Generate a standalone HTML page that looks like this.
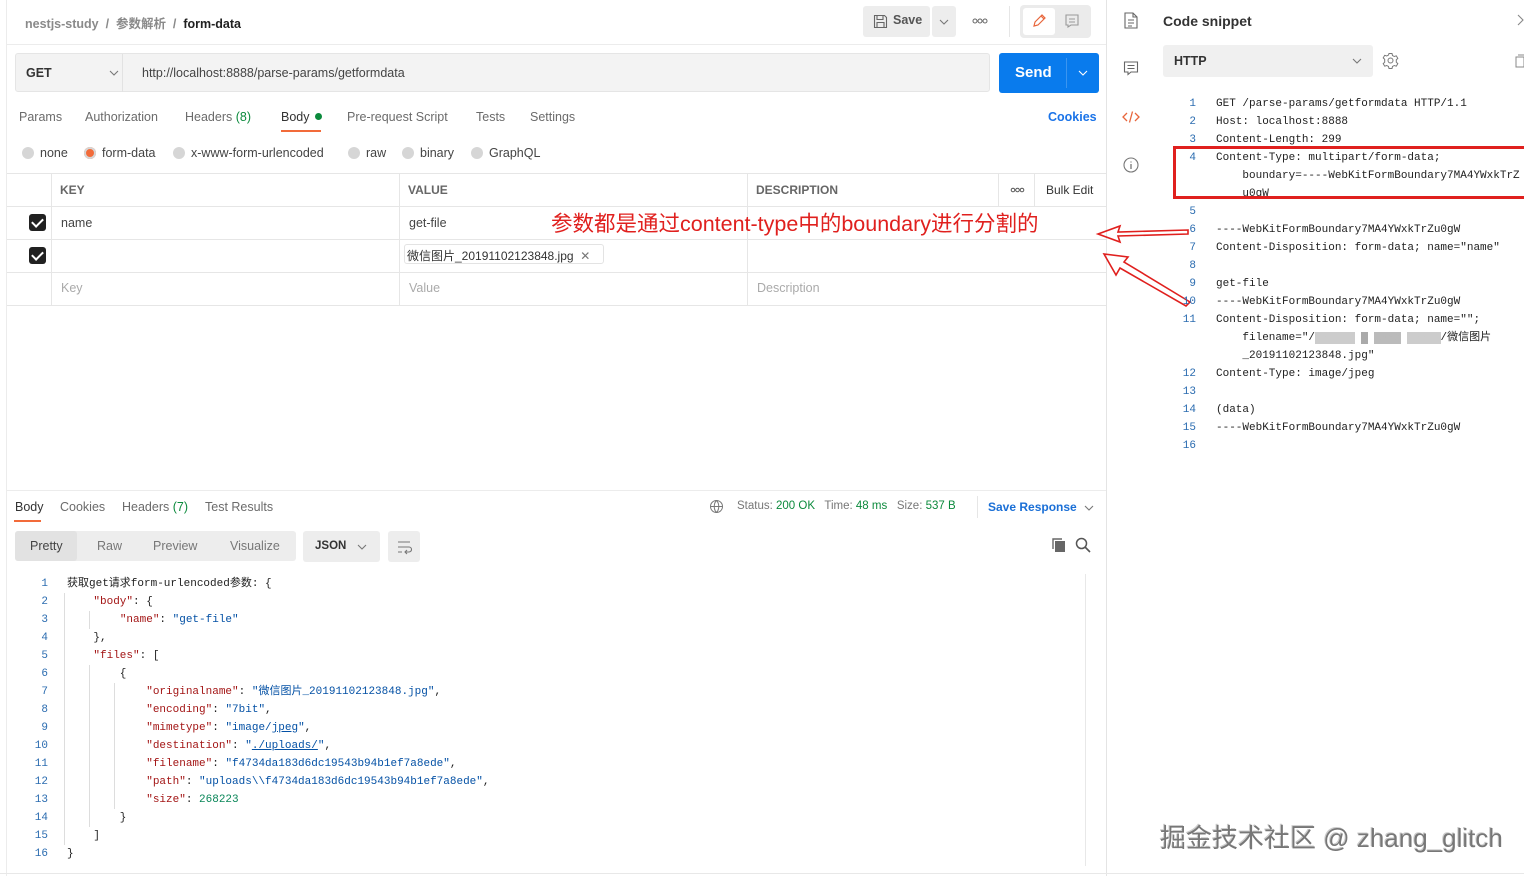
<!DOCTYPE html>
<html><head><meta charset="utf-8"><style>
*{margin:0;padding:0;box-sizing:border-box}
body{width:1524px;height:876px;overflow:hidden;background:#fff;font-family:"Liberation Sans","Noto Sans CJK SC",sans-serif;font-size:12.5px;color:#505050;position:relative}
.a{position:absolute;white-space:nowrap}
pre.a{white-space:pre}
.hl{position:absolute;height:1px;background:#e6e6e6}
.vl{position:absolute;width:1px;background:#e6e6e6}
.mono{font-family:"Liberation Mono","Noto Sans CJK SC",monospace;font-size:11px;color:#212121}
.ln{position:absolute;text-align:right;width:30px;color:#2b6cb0;font-family:"Liberation Mono",monospace;font-size:11px}
.k{color:#a31515}.s{color:#0451a5}.n{color:#098658}
.radio{display:inline-block;width:12px;height:12px;border-radius:50%;background:#d6d6d6;vertical-align:-2px;margin-right:6px}
.cb{position:absolute;width:17px;height:17px;background:#212121;border-radius:3px}
.cb:after{content:"";position:absolute;left:5px;top:2px;width:5px;height:9px;border:solid #fff;border-width:0 2px 2px 0;transform:rotate(45deg)}
.chev{position:absolute;width:10px;height:6px}
</style></head><body>
<svg width="0" height="0" style="position:absolute"><defs><symbol id="cv" viewBox="0 0 10 6"><path d="M1 1l4 4 4-4" fill="none" stroke="currentColor" stroke-width="1.1"/></symbol></defs></svg>
<div class="vl" style="left:6px;top:0;height:876px;background:#ececec"></div>
<div class="vl" style="left:1106px;top:0;height:876px;background:#e4e4e4"></div>
<div class="hl" style="left:0;top:873px;width:1524px;background:#e8e8e8"></div>

<div class="a" style="left:25px;top:13px;color:#8a8a8a;font-weight:bold;font-size:12.5px">nestjs-study &nbsp;/&nbsp; 参数解析 &nbsp;/&nbsp; <span style="color:#212121">form-data</span></div>
<div class="a" style="left:863px;top:6px;width:67px;height:31px;background:#ededed;border-radius:3px"></div>
<svg class="a" style="left:873px;top:14px" width="15" height="15" viewBox="0 0 15 15"><path d="M1.5 1.5h10l2 2v10h-12z M4 1.5v4h6v-4 M4 13.5v-5h7v5" fill="none" stroke="#666" stroke-width="1.1"/></svg>
<div class="a" style="left:893px;top:13px;font-weight:bold;color:#555">Save</div>
<div class="a" style="left:932px;top:6px;width:24px;height:31px;background:#ededed;border-radius:3px"></div>
<svg class="chev" style="left:939px;top:19px;color:#777"><use href="#cv"/></svg>
<svg class="a" style="left:972px;top:18px" width="16" height="6" viewBox="0 0 16 6"><circle cx="3" cy="3" r="2" fill="none" stroke="#666"/><circle cx="8" cy="3" r="2" fill="none" stroke="#666"/><circle cx="13" cy="3" r="2" fill="none" stroke="#666"/></svg>
<div class="vl" style="left:1009px;top:6px;height:31px"></div>
<div class="a" style="left:1020px;top:5px;width:71px;height:33px;background:#ebebeb;border-radius:4px"></div>
<div class="a" style="left:1023px;top:8px;width:32px;height:27px;background:#fff;border-radius:3px"></div>
<svg class="a" style="left:1031px;top:13px" width="16" height="16" viewBox="0 0 16 16"><path d="M3 13l1-4 7-7 3 3-7 7z M10 3l3 3" fill="none" stroke="#e8663c" stroke-width="1.2"/></svg>
<svg class="a" style="left:1064px;top:13px" width="16" height="16" viewBox="0 0 16 16"><path d="M2 2h12v10H7l-3 2v-2H2z M5 6h6 M5 9h6" fill="none" stroke="#999" stroke-width="1.1"/></svg>
<div class="hl" style="left:7px;top:44px;width:1099px;background:#ececec"></div>

<div class="a" style="left:15px;top:53px;width:975px;height:39px;background:#f3f3f3;border:1px solid #e5e5e5;border-radius:3px"></div>
<div class="vl" style="left:122px;top:54px;height:38px;background:#e2e2e2"></div>
<div class="a" style="left:26px;top:66px;font-weight:bold;color:#333;font-size:12.5px">GET</div>
<svg class="chev" style="left:109px;top:70px;color:#777"><use href="#cv"/></svg>
<div class="a" style="left:142px;top:66px;color:#444;font-size:12.5px">http://localhost:8888/parse-params/getformdata</div>
<div class="a" style="left:999px;top:53px;width:100px;height:40px;background:#097bed;border-radius:3px"></div>
<div class="a" style="left:1015px;top:64px;color:#fff;font-weight:bold;font-size:15px">Send</div>
<div class="a" style="left:1066px;top:58px;width:1px;height:30px;background:#3b95f0"></div>
<svg class="chev" style="left:1078px;top:70px;color:#fff"><use href="#cv"/></svg>

<div class="a" style="left:19px;top:110px;color:#6b6b6b">Params</div>
<div class="a" style="left:85px;top:110px;color:#6b6b6b">Authorization</div>
<div class="a" style="left:185px;top:110px;color:#6b6b6b">Headers <span style="color:#0b8a3c">(8)</span></div>
<div class="a" style="left:281px;top:110px;color:#333">Body <span style="display:inline-block;width:7px;height:7px;border-radius:50%;background:#0b8a3c;vertical-align:1px;margin-left:2px"></span></div>
<div class="a" style="left:281px;top:130px;width:40px;height:2px;background:#f26b3a"></div>
<div class="a" style="left:347px;top:110px;color:#6b6b6b">Pre-request Script</div>
<div class="a" style="left:476px;top:110px;color:#6b6b6b">Tests</div>
<div class="a" style="left:530px;top:110px;color:#6b6b6b">Settings</div>
<div class="a" style="left:1048px;top:110px;color:#1a73e8;font-weight:bold">Cookies</div>

<div class="a" style="left:22px;top:146px;color:#444"><span class="radio"></span>none</div>
<div class="a" style="left:84px;top:146px;color:#444"><span class="radio" style="background:#f26b3a;box-shadow:0 0 0 2px #d6d6d6 inset"></span>form-data</div>
<div class="a" style="left:173px;top:146px;color:#444"><span class="radio"></span>x-www-form-urlencoded</div>
<div class="a" style="left:348px;top:146px;color:#444"><span class="radio"></span>raw</div>
<div class="a" style="left:402px;top:146px;color:#444"><span class="radio"></span>binary</div>
<div class="a" style="left:471px;top:146px;color:#444"><span class="radio"></span>GraphQL</div>

<div class="hl" style="left:7px;top:173px;width:1099px"></div>
<div class="hl" style="left:7px;top:206px;width:1099px"></div>
<div class="hl" style="left:7px;top:239px;width:1099px"></div>
<div class="hl" style="left:7px;top:272px;width:1099px"></div>
<div class="hl" style="left:7px;top:305px;width:1099px"></div>
<div class="vl" style="left:51px;top:173px;height:132px"></div>
<div class="vl" style="left:399px;top:173px;height:132px"></div>
<div class="vl" style="left:747px;top:173px;height:132px"></div>
<div class="vl" style="left:998px;top:173px;height:33px"></div>
<div class="vl" style="left:1034px;top:173px;height:33px"></div>
<div class="a" style="left:60px;top:183px;font-weight:bold;color:#666;font-size:12px">KEY</div>
<div class="a" style="left:408px;top:183px;font-weight:bold;color:#666;font-size:12px">VALUE</div>
<div class="a" style="left:756px;top:183px;font-weight:bold;color:#666;font-size:12px">DESCRIPTION</div>
<svg class="a" style="left:1010px;top:187px" width="15" height="6" viewBox="0 0 15 6"><circle cx="3" cy="3" r="1.8" fill="none" stroke="#555"/><circle cx="7.5" cy="3" r="1.8" fill="none" stroke="#555"/><circle cx="12" cy="3" r="1.8" fill="none" stroke="#555"/></svg>
<div class="a" style="left:1046px;top:183px;color:#333;font-size:12px">Bulk Edit</div>
<div class="cb" style="left:29px;top:214px"></div>
<div class="cb" style="left:29px;top:247px"></div>
<div class="a" style="left:61px;top:216px;color:#444">name</div>
<div class="a" style="left:409px;top:216px;color:#444">get-file</div>
<div class="a" style="left:404px;top:244px;height:20px;width:200px;border:1px solid #e3e3e3;border-radius:3px;background:#fff"></div>
<div class="a" style="left:407px;top:247px;color:#333;font-size:12px">微信图片_20191102123848.jpg &nbsp;<span style="color:#777">✕</span></div>
<div class="a" style="left:61px;top:281px;color:#aaa">Key</div>
<div class="a" style="left:409px;top:281px;color:#aaa">Value</div>
<div class="a" style="left:757px;top:281px;color:#aaa">Description</div>

<div class="a" style="left:551px;top:207px;color:#e0201e;font-size:21.5px">参数都是通过content-type中的boundary进行分割的</div>
<svg class="a" style="left:1090px;top:220px" width="110" height="90" viewBox="0 0 110 90">
<path d="M98 10 L28 12 L30 6 L8 14 L30 22 L28 16 L98 14 Z" fill="none" stroke="#e0201e" stroke-width="1.6"/>
<path d="M100 82 L34 42 L38 37 L14 34 L26 55 L30 48 L96 86 Z" fill="none" stroke="#e0201e" stroke-width="1.6"/>
</svg>

<div class="hl" style="left:7px;top:490px;width:1099px;background:#ececec"></div>
<div class="a" style="left:15px;top:500px;color:#333">Body</div>
<div class="a" style="left:14px;top:520px;width:27px;height:2px;background:#f26b3a"></div>
<div class="a" style="left:60px;top:500px;color:#6b6b6b">Cookies</div>
<div class="a" style="left:122px;top:500px;color:#6b6b6b">Headers <span style="color:#0b8a3c">(7)</span></div>
<div class="a" style="left:205px;top:500px;color:#6b6b6b">Test Results</div>
<svg class="a" style="left:709px;top:499px" width="15" height="15" viewBox="0 0 15 15"><circle cx="7.5" cy="7.5" r="6" fill="none" stroke="#777"/><path d="M1.5 7.5h12 M7.5 1.5c-3 3-3 9 0 12 M7.5 1.5c3 3 3 9 0 12" fill="none" stroke="#777"/></svg>
<div class="a" style="left:737px;top:500px;font-size:11.5px;color:#777">Status: <span style="color:#0b8a3c">200 OK</span> &nbsp; Time: <span style="color:#0b8a3c">48 ms</span> &nbsp; Size: <span style="color:#0b8a3c">537 B</span></div>
<div class="vl" style="left:977px;top:496px;height:22px"></div>
<div class="a" style="left:988px;top:500px;color:#1a6fd6;font-weight:bold;font-size:12px">Save Response</div>
<svg class="chev" style="left:1084px;top:505px;color:#777"><use href="#cv"/></svg>

<div class="a" style="left:15px;top:531px;width:281px;height:30px;background:#ededed;border-radius:3px"></div>
<div class="a" style="left:15px;top:531px;width:62px;height:30px;background:#e2e2e2;border-radius:3px"></div>
<div class="a" style="left:30px;top:539px;color:#444">Pretty</div>
<div class="a" style="left:97px;top:539px;color:#777">Raw</div>
<div class="a" style="left:153px;top:539px;color:#777">Preview</div>
<div class="a" style="left:230px;top:539px;color:#777">Visualize</div>
<div class="a" style="left:303px;top:531px;width:77px;height:31px;background:#ededed;border-radius:3px"></div>
<div class="a" style="left:315px;top:540px;color:#333;font-weight:bold;font-size:11.5px">JSON</div>
<svg class="chev" style="left:357px;top:544px;color:#777"><use href="#cv"/></svg>
<div class="a" style="left:388px;top:531px;width:32px;height:31px;background:#ededed;border-radius:3px"></div>
<svg class="a" style="left:396px;top:539px" width="16" height="16" viewBox="0 0 16 16"><path d="M2 3h12 M2 8h11a2.5 2.5 0 0 1 0 5H9 M11 11l-2 2 2 2 M2 13h4" fill="none" stroke="#777" stroke-width="1.1"/></svg>
<svg class="a" style="left:1051px;top:537px" width="16" height="16" viewBox="0 0 16 16"><rect x="4" y="4" width="10" height="11" fill="#666"/><path d="M2 12V2h9" fill="none" stroke="#666" stroke-width="1.4"/></svg>
<svg class="a" style="left:1075px;top:537px" width="16" height="16" viewBox="0 0 16 16"><circle cx="6.5" cy="6.5" r="5" fill="none" stroke="#555" stroke-width="1.5"/><path d="M10 10l5 5" stroke="#555" stroke-width="1.6"/></svg>
<div class="vl" style="left:1085px;top:574px;height:292px;background:#e8e8e8"></div>

<div class="ln" style="left:18px;top:575px;line-height:18px">1<br>2<br>3<br>4<br>5<br>6<br>7<br>8<br>9<br>10<br>11<br>12<br>13<br>14<br>15<br>16</div>
<div class="vl" style="left:64px;top:593px;height:252px;background:#ddd"></div>
<div class="vl" style="left:89px;top:611px;height:18px;background:#ddd"></div>
<div class="vl" style="left:89px;top:665px;height:162px;background:#ddd"></div>
<div class="vl" style="left:114px;top:683px;height:126px;background:#ddd"></div>
<pre class="a mono" style="left:67px;top:575px;line-height:18px">获取get请求form-urlencoded参数: {
    <span class="k">"body"</span>: {
        <span class="k">"name"</span>: <span class="s">"get-file"</span>
    },
    <span class="k">"files"</span>: [
        {
            <span class="k">"originalname"</span>: <span class="s">"微信图片_20191102123848.jpg"</span>,
            <span class="k">"encoding"</span>: <span class="s">"7bit"</span>,
            <span class="k">"mimetype"</span>: <span class="s">"image/<u>jpeg</u>"</span>,
            <span class="k">"destination"</span>: <span class="s">"<u>./uploads/</u>"</span>,
            <span class="k">"filename"</span>: <span class="s">"f4734da183d6dc19543b94b1ef7a8ede"</span>,
            <span class="k">"path"</span>: <span class="s">"uploads\\f4734da183d6dc19543b94b1ef7a8ede"</span>,
            <span class="k">"size"</span>: <span class="n">268223</span>
        }
    ]
}</pre>

<svg class="a" style="left:1124px;top:12px" width="14" height="17" viewBox="0 0 14 17"><path d="M1 1h8l4 4v11H1z M9 1v4h4 M4 8h6 M4 11h6 M4 14h4" fill="none" stroke="#666" stroke-width="1.1"/></svg>
<svg class="a" style="left:1123px;top:60px" width="16" height="16" viewBox="0 0 16 16"><path d="M1.5 2h13v10H8l-3 2.5V12H1.5z M4.5 5.5h7 M4.5 8.5h7" fill="none" stroke="#666" stroke-width="1.1"/></svg>
<svg class="a" style="left:1122px;top:110px" width="18" height="14" viewBox="0 0 18 14"><path d="M5 3L1 7l4 4 M13 3l4 4-4 4 M10.5 1.5L7.5 12.5" fill="none" stroke="#e8663c" stroke-width="1.3"/></svg>
<svg class="a" style="left:1123px;top:157px" width="16" height="16" viewBox="0 0 16 16"><circle cx="8" cy="8" r="7" fill="none" stroke="#777" stroke-width="1.1"/><path d="M8 7v5 M8 4.5v1" stroke="#777" stroke-width="1.3"/></svg>
<div class="a" style="left:1163px;top:13px;color:#333;font-weight:bold;font-size:14px">Code snippet</div>
<svg class="a" style="left:1517px;top:14px" width="7" height="12" viewBox="0 0 7 12"><path d="M1 1l5 5-5 5" fill="none" stroke="#888" stroke-width="1.1"/></svg>
<div class="a" style="left:1163px;top:45px;width:210px;height:32px;background:#f0f0f0;border-radius:3px"></div>
<div class="a" style="left:1174px;top:54px;color:#333;font-weight:bold;font-size:12.5px">HTTP</div>
<svg class="chev" style="left:1352px;top:58px;color:#777"><use href="#cv"/></svg>
<svg class="a" style="left:1382px;top:52px" width="17" height="17" viewBox="0 0 17 17"><circle cx="8.5" cy="8.5" r="2.5" fill="none" stroke="#777"/><path d="M7 1.5h3l.5 2 1.8 1 2-.7 1.5 2.6-1.5 1.4v2.4l1.5 1.4-1.5 2.6-2-.7-1.8 1-.5 2H7l-.5-2-1.8-1-2 .7-1.5-2.6 1.5-1.4V7.3L1.2 5.9l1.5-2.6 2 .7 1.8-1z" fill="none" stroke="#777"/></svg>
<svg class="a" style="left:1515px;top:54px" width="9" height="14" viewBox="0 0 9 14"><path d="M3 1h6 M1 3v10h8V3z" fill="none" stroke="#888"/></svg>

<div class="ln" style="left:1166px;top:95px;line-height:18px">1<br>2<br>3<br>4<br><br><br>5<br>6<br>7<br>8<br>9<br>10<br>11<br><br><br>12<br>13<br>14<br>15<br>16</div>
<pre class="a mono" style="left:1216px;top:95px;line-height:18px">GET /parse-params/getformdata HTTP/1.1
Host: localhost:8888
Content-Length: 299
Content-Type: multipart/form-data;
    boundary=----WebKitFormBoundary7MA4YWxkTrZ
    u0gW

----WebKitFormBoundary7MA4YWxkTrZu0gW
Content-Disposition: form-data; name="name"

get-file
----WebKitFormBoundary7MA4YWxkTrZu0gW
Content-Disposition: form-data; name="";
    filename="/<span style="background:#ccc;color:#ccc">xxxxxx</span> <span style="background:#aaa;color:#aaa">x</span> <span style="background:#bbb;color:#bbb">xxxx</span> <span style="background:#ccc;color:#ccc">xxxxx</span>/微信图片
    _20191102123848.jpg"
Content-Type: image/jpeg

(data)
----WebKitFormBoundary7MA4YWxkTrZu0gW
</pre>
<div class="a" style="left:1173px;top:146px;width:360px;height:53px;border:3px solid #e0201e;background:transparent"></div>

<div class="a" style="left:1160px;top:818px;font-size:26px;color:#777;text-shadow:1px 1px 0 #fff,-1px -1px 0 #ccc">掘金技术社区 @ zhang_glitch</div>
</body></html>
